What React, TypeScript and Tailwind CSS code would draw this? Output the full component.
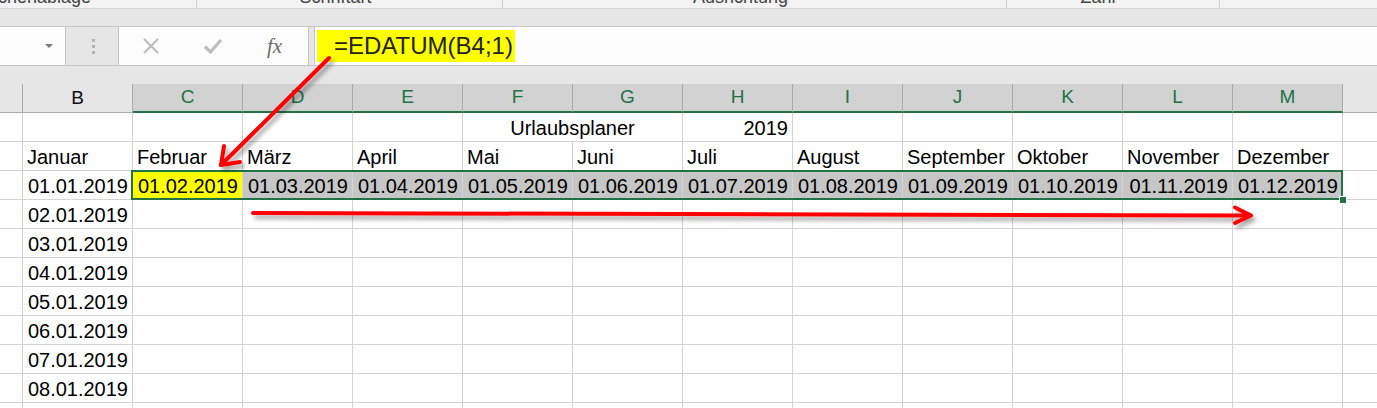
import React from "react";

const letters = ["B", "C", "D", "E", "F", "G", "H", "I", "J", "K", "L", "M"];
const months = ["Januar", "Februar", "März", "April", "Mai", "Juni", "Juli", "August", "September", "Oktober", "November", "Dezember"];
const firstDays = months.map((_, i) => `01.${String(i + 1).padStart(2, "0")}.2019`);
const januaryDays = [2, 3, 4, 5, 6, 7, 8].map((d) => `0${d}.01.2019`);

function Cell({ w = "w-[110px]", className = "", children }: { w?: string; className?: string; children?: React.ReactNode }) {
  return (
    <div className={`${w} shrink-0 h-full border-r border-[#d4d4d4] flex items-end pb-[3px] leading-[20px] whitespace-nowrap ${className}`}>
      {children}
    </div>
  );
}

function Row({ children, last = false }: { children?: React.ReactNode; last?: boolean }) {
  return (
    <div className="flex h-[29px] border-b border-[#d4d4d4]">
      <Cell w="w-[23px]" />
      {children}
      {!last && <div className="flex-1 h-full" />}
    </div>
  );
}

function Ribbon() {
  return (
    <div className="h-[9px] bg-[#f3f3f3] border-b border-[#d6d6d6] flex overflow-hidden text-[18px] leading-[18px] text-[#444]">
      <div className="w-[197px] shrink-0 border-r border-[#d0d0d0] flex justify-end pr-[105px]">
        <span className="-mt-[12px]">Zwischenablage</span>
      </div>
      <div className="w-[306px] shrink-0 border-r border-[#d0d0d0] flex justify-center pr-[28px]">
        <span className="-mt-[12px]">Schriftart</span>
      </div>
      <div className="w-[504px] shrink-0 border-r border-[#d0d0d0] flex justify-center pr-[28px]">
        <span className="-mt-[12px]">Ausrichtung</span>
      </div>
      <div className="w-[213px] shrink-0 border-r border-[#d0d0d0] flex justify-center pr-[30px]">
        <span className="-mt-[12px]">Zahl</span>
      </div>
      <div className="flex-1" />
    </div>
  );
}

function FormulaBar() {
  return (
    <div className="h-[40px] bg-[#e6e6e6] border-y border-[#c6c6c6] flex">
      {/* name box */}
      <div className="w-[66px] bg-[#fdfdfd] border-r border-[#c6c6c6] flex items-center justify-end pr-[12px]">
        <div className="w-0 h-0 border-l-[4px] border-r-[4px] border-t-[4px] border-l-transparent border-r-transparent border-t-[#7a7a7a]" />
      </div>
      <div className="w-[52px] flex flex-col items-center justify-center gap-[3px] pl-[2px]">
        <div className="w-[3px] h-[3px] bg-[#b5b5b5]" />
        <div className="w-[3px] h-[3px] bg-[#b5b5b5]" />
        <div className="w-[3px] h-[3px] bg-[#b5b5b5]" />
      </div>
      {/* cancel / enter / insert function */}
      <div className="w-[191px] bg-[#fdfdfd] border-x border-[#c6c6c6] flex items-center">
        <svg className="ml-[23px]" width="18" height="18" viewBox="0 0 18 18">
          <path d="M2 2L16 16M16 2L2 16" stroke="#bdbdbd" strokeWidth="2.2" fill="none" />
        </svg>
        <svg className="ml-[43px]" width="20" height="18" viewBox="0 0 20 18">
          <path d="M2 9.5L7.5 15L18 3" stroke="#bdbdbd" strokeWidth="3.2" fill="none" />
        </svg>
        <span className="ml-[44px] text-[21px] italic text-[#6b6b6b] leading-none" style={{ fontFamily: '"Liberation Serif", serif' }}>
          fx
        </span>
      </div>
      <div className="w-[5px]" />
      <div className="flex-1 bg-[#fdfdfd] border-l border-[#c6c6c6] flex items-center pl-[2px]">
        <div className="h-[32px] w-[198px] bg-[#ffff00] flex items-center pl-[17px] text-[24px] text-[#222]">
          =EDATUM(B4;1)
        </div>
      </div>
    </div>
  );
}

function ColumnHeaders() {
  return (
    <div className="flex h-[29px] bg-[#e6e6e6]">
      <div className="w-[23px] shrink-0 border-r border-b border-[#ababab]" />
      {letters.map((l) => {
        const selected = l !== "B";
        return (
          <div
            key={l}
            className={`w-[110px] shrink-0 border-r border-[#ababab] flex items-center justify-center text-[19px] ${
              selected ? "bg-[#d2d2d2] text-[#217346] border-b-2 border-b-[#217346]" : "text-[#111] border-b border-b-[#ababab]"
            }`}
          >
            {l}
          </div>
        );
      })}
      <div className="flex-1 border-b border-[#ababab]" />
    </div>
  );
}

function Arrows() {
  return (
    <svg className="absolute inset-0 pointer-events-none" width="1377" height="408" viewBox="0 0 1377 408">
      <defs>
        <filter id="shade" x="-10%" y="-50%" width="120%" height="200%">
          <feDropShadow dx="3" dy="4" stdDeviation="2" floodColor="#000" floodOpacity="0.35" />
        </filter>
      </defs>
      <g stroke="#ff0000" strokeWidth="4" strokeLinecap="round" strokeLinejoin="round" fill="none" filter="url(#shade)">
        <path d="M329 58L221 165" />
        <path d="M224 146L221 165L240 162" />
        <path d="M253 213L1250 215.5" />
        <path d="M1235 207.5L1251 215.5L1235 223" />
      </g>
    </svg>
  );
}

export default function App() {
  return (
    <div className="relative w-[1377px] h-[408px] overflow-hidden bg-white text-black" style={{ fontFamily: '"Liberation Sans", Arial, sans-serif' }}>
      <Ribbon />
      <div className="h-[17px] bg-[#e6e6e6]" />
      <FormulaBar />
      <div className="h-[18px] bg-[#e6e6e6]" />
      <ColumnHeaders />

      <div className="text-[20px]">
        {/* title row */}
        <Row>
          <Cell />
          <Cell />
          <Cell />
          <Cell />
          <Cell w="w-[220px]" className="justify-center">
            Urlaubsplaner
          </Cell>
          <Cell className="justify-end pr-[4px]">2019</Cell>
          <Cell />
          <Cell />
          <Cell />
          <Cell />
          <Cell />
        </Row>

        {/* month names */}
        <Row>
          {months.map((m) => (
            <Cell key={m} className="pl-[4px]">
              {m}
            </Cell>
          ))}
        </Row>

        {/* first day of each month */}
        <Row>
          <Cell className="justify-end pr-[4px]">{firstDays[0]}</Cell>
          <div className="relative flex h-full">
            {firstDays.slice(1).map((d, i) => (
              <Cell key={d} className={`justify-end pr-[4px] ${i === 0 ? "bg-[#ffff00]" : "bg-[#c6c6c6]"}`}>
                {d}
              </Cell>
            ))}
            <div className="absolute left-[-2px] top-[-1px] right-0 bottom-[-1px] border-2 border-[#217346]" />
            <div className="absolute right-[-4px] bottom-[-5px] w-[8px] h-[8px] bg-[#217346] border border-white" />
          </div>
        </Row>

        {januaryDays.map((d) => (
          <Row key={d}>
            <Cell className="justify-end pr-[4px]">{d}</Cell>
            {letters.slice(1).map((l) => (
              <Cell key={l} />
            ))}
          </Row>
        ))}
        <Row>
          <Cell />
          {letters.slice(1).map((l) => (
            <Cell key={l} />
          ))}
        </Row>
      </div>

      <Arrows />
    </div>
  );
}
